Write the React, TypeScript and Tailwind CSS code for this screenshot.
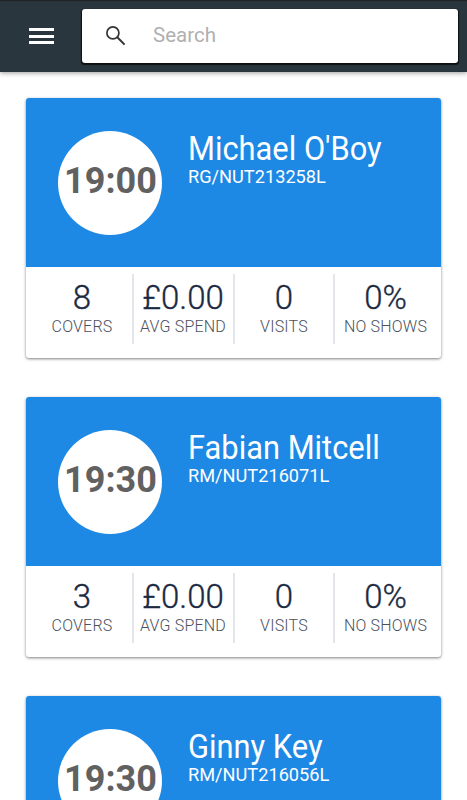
interface Booking {
  time: string;
  name: string;
  code: string;
  covers?: number;
}

const bookings: Booking[] = [
  { time: '19:00', name: "Michael O'Boy", code: 'RG/NUT213258L', covers: 8 },
  { time: '19:30', name: 'Fabian Mitcell', code: 'RM/NUT216071L', covers: 3 },
  { time: '19:30', name: 'Ginny Key', code: 'RM/NUT216056L' },
];

function Header() {
  return (
    <header className="flex h-[72px] shrink-0 items-start border-t border-[#222] bg-[#29363d] pt-2 pr-[9px] shadow-[0_1px_5px_rgba(0,0,0,0.4)]">
      <button aria-label="Menu" className="mt-[19px] ml-[29px] flex w-[25px] flex-col gap-[3.5px]">
        <span className="h-[3px] w-full bg-white" />
        <span className="h-[3px] w-full bg-white" />
        <span className="h-[3px] w-full bg-white" />
      </button>
      <label className="ml-7 flex h-[54px] flex-1 items-center rounded-[3px] bg-white pb-0.5 shadow-[0_1px_1px_0.5px_rgba(0,0,0,0.7)]">
        <svg viewBox="0 0 20 20" className="mt-px ml-6 size-5 shrink-0 fill-none stroke-[#333] stroke-[1.7]">
          <circle cx="6.9" cy="6.9" r="6" />
          <path d="M11.3 11.3 18.6 18.6" className="stroke-2" />
        </svg>
        <input
          placeholder="Search"
          className="ml-[27px] w-60 bg-transparent text-[20.5px] placeholder-[#b0b0b0] focus:outline-none"
        />
      </label>
    </header>
  );
}

function Stat({ value, label, className }: { value: string; label: string; className: string }) {
  return (
    <div className={`flex h-[70px] flex-col items-center border-[#e2e6ea] whitespace-nowrap ${className}`}>
      <span className="mt-[5px] text-[33px] leading-[38px] font-light text-[#1b2a41] [-webkit-text-stroke:0.35px_#1b2a41]">
        {value}
      </span>
      <span className="text-[16px] leading-5 font-light tracking-[0.2px] text-[#4a5160]">{label}</span>
    </div>
  );
}

function BookingCard({ booking }: { booking: Booking }) {
  return (
    <article className="h-[260px] shrink-0 overflow-hidden rounded-[3px] bg-white shadow-[0_1px_3px_rgba(0,0,0,0.5)]">
      <div className="flex h-[169px] bg-[#1e88e5] pt-[33px] pl-8">
        <div className="flex size-[104px] shrink-0 items-center justify-center rounded-full bg-white pb-1 pl-px text-[36px] font-bold text-[#616161]">
          {booking.time}
        </div>
        <div className="ml-[26px] whitespace-nowrap text-white">
          <h2 className="origin-left scale-x-[0.935] text-[33px] leading-9">{booking.name}</h2>
          <p className="text-[18.2px] leading-5">{booking.code}</p>
        </div>
      </div>
      {booking.covers !== undefined && (
        <div className="flex pt-[7px]">
          <Stat value={String(booking.covers)} label="COVERS" className="w-[108px] border-r-2 pl-1.5" />
          <Stat value="£0.00" label="AVG SPEND" className="w-[101px] border-r-2 pr-px" />
          <Stat value="0" label="VISITS" className="w-[100px] border-r-2" />
          <Stat value="0%" label="NO SHOWS" className="w-[101px]" />
        </div>
      )}
    </article>
  );
}

export default function App() {
  return (
    <div className="flex h-screen flex-col overflow-hidden bg-white font-['Roboto',sans-serif]">
      <Header />
      <main className="flex flex-1 flex-col gap-[39px] overflow-hidden px-[26px] pt-[26px]">
        {bookings.map((booking) => (
          <BookingCard key={booking.code} booking={booking} />
        ))}
      </main>
    </div>
  );
}
